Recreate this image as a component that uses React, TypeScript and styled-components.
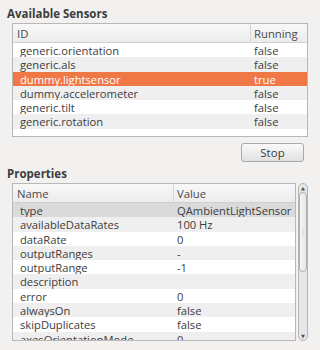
import styled, { createGlobalStyle } from 'styled-components';

const GlobalStyle = createGlobalStyle`
  html, body {
    margin: 0;
    padding: 0;
    background: #f2f1f0;
    font-family: 'Open Sans', 'DejaVu Sans', sans-serif;
    color: #3c3c3c;
  }
`;

const Window = styled.div`
  width: 320px;
  height: 350px;
  overflow: hidden;
  padding: 6px 12px 0 7px;
  box-sizing: border-box;
  display: flex;
  flex-direction: column;
`;

const SectionTitle = styled.div`
  font-size: 11.5px;
  font-weight: 700;
  line-height: 15px;
  height: 17px;
  color: #3c3c3c;
`;

const Indented = styled.div`
  padding-left: 5px;
`;

const TableFrame = styled.div<{ $height: number }>`
  height: ${p => p.$height}px;
  border: 1px solid #b8b8b8;
  background: #ffffff;
  overflow: hidden;
  box-sizing: border-box;
`;

const HeaderRow = styled.div<{ $split: number }>`
  display: grid;
  grid-template-columns: ${p => p.$split}px 1fr;
  height: 18px;
  background: linear-gradient(#f8f8f8, #ececec);
  border-bottom: 1px solid #cfcfcf;
`;

const HeaderCell = styled.div<{ $divider?: boolean }>`
  font-size: 11.3px;
  line-height: 19px;
  color: #4a4a4a;
  padding-left: ${p => (p.$divider ? '3px' : '4px')};
  border-left: ${p => (p.$divider ? '1px solid #d6d6d6' : 'none')};
`;

const Row = styled.div<{ $split: number; $tone: 'white' | 'grey' | 'active' | 'inactive' }>`
  display: grid;
  grid-template-columns: ${p => p.$split}px 1fr;
  height: 14.3px;
  font-size: 11.2px;
  line-height: 15.3px;
  background: ${p =>
    p.$tone === 'active'
      ? '#f07746'
      : p.$tone === 'inactive'
      ? '#dadada'
      : p.$tone === 'grey'
      ? '#efefef'
      : '#ffffff'};
  color: ${p => (p.$tone === 'active' ? '#ffffff' : '#3c3c3c')};
`;

const Cell = styled.div<{ $right?: boolean }>`
  padding-left: ${p => (p.$right ? '4px' : '7px')};
  white-space: nowrap;
  overflow: hidden;
`;

const ButtonBar = styled.div`
  display: flex;
  justify-content: flex-end;
  padding: 6px 4px 0 0;
  height: 29px;
  box-sizing: border-box;
`;

const Button = styled.button`
  width: 63px;
  height: 19px;
  border: 1px solid #a9a9a9;
  border-radius: 3px;
  background: linear-gradient(#fafafa, #e1e1e1);
  font-family: 'Open Sans', 'DejaVu Sans', sans-serif;
  font-size: 11.5px;
  color: #3c3c3c;
  padding: 0;
  line-height: 16px;
`;

const PropsArea = styled.div`
  display: flex;
  gap: 2px;
`;

const PropsTable = styled.div`
  flex: 1;
`;

const ScrollTrack = styled.div`
  width: 10px;
  height: 158px;
  border: 1px solid #b5b5b5;
  border-radius: 5px;
  background: #e6e6e6;
  box-sizing: border-box;
  display: flex;
  flex-direction: column;
  align-items: center;
`;

const Arrow = styled.div`
  font-size: 5px;
  line-height: 8px;
  color: #555;
  height: 8px;
`;

const Thumb = styled.div`
  width: 8px;
  height: 80px;
  border: 1px solid #b0b0b0;
  border-radius: 4px;
  background: linear-gradient(90deg, #f6f6f6, #e4e4e4);
  box-sizing: border-box;
  display: flex;
  align-items: center;
  justify-content: center;
  font-size: 6px;
  color: #9a9a9a;
`;

const Spacer = styled.div`
  flex: 1;
`;

const sensors = [
  ['generic.orientation', 'false'],
  ['generic.als', 'false'],
  ['dummy.lightsensor', 'true'],
  ['dummy.accelerometer', 'false'],
  ['generic.tilt', 'false'],
  ['generic.rotation', 'false'],
];

const properties = [
  ['type', 'QAmbientLightSensor'],
  ['availableDataRates', '100 Hz'],
  ['dataRate', '0'],
  ['outputRanges', '-'],
  ['outputRange', '-1'],
  ['description', ''],
  ['error', '0'],
  ['alwaysOn', 'false'],
  ['skipDuplicates', 'false'],
  ['axesOrientationMode', '0'],
];

export default function App() {
  return (
    <>
      <GlobalStyle />
      <Window>
        <SectionTitle>Available Sensors</SectionTitle>
        <Indented>
          <TableFrame $height={114}>
            <HeaderRow $split={237}>
              <HeaderCell>ID</HeaderCell>
              <HeaderCell $divider>Running</HeaderCell>
            </HeaderRow>
            {sensors.map(([id, running], i) => (
              <Row key={id} $split={237} $tone={i === 2 ? 'active' : i % 2 ? 'grey' : 'white'}>
                <Cell>{id}</Cell>
                <Cell $right>{running}</Cell>
              </Row>
            ))}
          </TableFrame>
        </Indented>
        <ButtonBar>
          <Button>Stop</Button>
        </ButtonBar>
        <SectionTitle>Properties</SectionTitle>
        <Indented>
          <PropsArea>
            <PropsTable>
              <TableFrame $height={158}>
                <HeaderRow $split={160}>
                  <HeaderCell>Name</HeaderCell>
                  <HeaderCell $divider>Value</HeaderCell>
                </HeaderRow>
                {properties.map(([name, value], i) => (
                  <Row key={name} $split={160} $tone={i === 0 ? 'inactive' : i % 2 ? 'grey' : 'white'}>
                    <Cell>{name}</Cell>
                    <Cell $right>{value}</Cell>
                  </Row>
                ))}
              </TableFrame>
            </PropsTable>
            <ScrollTrack>
              <Arrow>▲</Arrow>
              <Thumb>⋮</Thumb>
              <Spacer />
              <Arrow>▼</Arrow>
            </ScrollTrack>
          </PropsArea>
        </Indented>
      </Window>
    </>
  );
}
